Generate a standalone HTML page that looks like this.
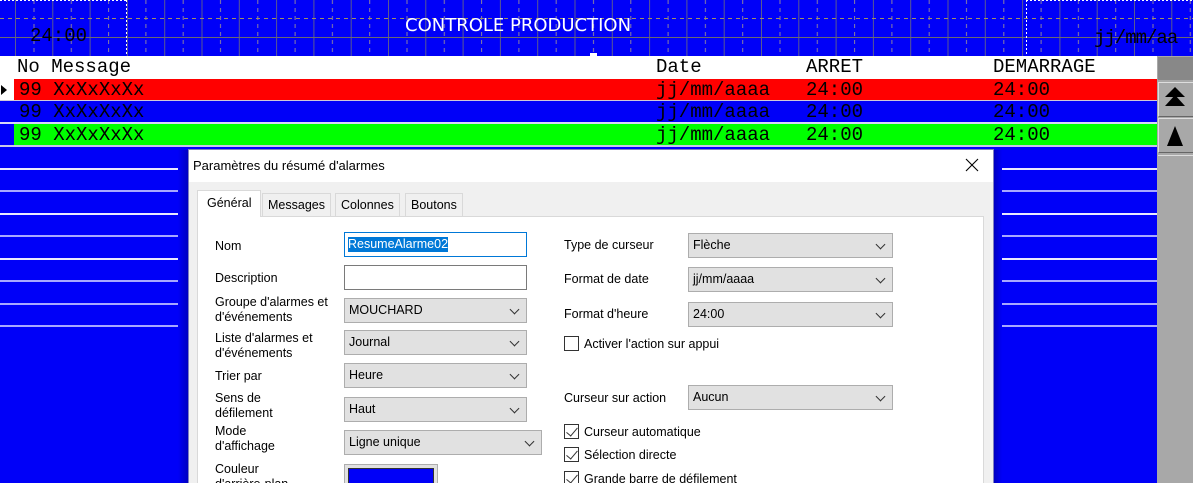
<!DOCTYPE html>
<html style="overflow:hidden"><head><meta charset="utf-8"><style>
*{margin:0;padding:0;box-sizing:border-box}
html,body{width:1193px;height:483px;overflow:hidden}
body{background:#0000f8;position:relative;font-family:"Liberation Sans",sans-serif}
.abs{position:absolute}
.mono{font-family:"Liberation Mono",monospace;font-size:19px;line-height:22px;color:#000}
.hl{position:absolute;left:0;width:1157px;height:2px;background:#a8a8ff}
.lbl{position:absolute;font-size:12.5px;color:#000;line-height:15px}
.cb{position:absolute;height:25px;background:#e1e1e1;border:1px solid #adadad;font-size:12.5px;line-height:23px;padding-left:4px;color:#000}
.cb:after{content:"";position:absolute;right:8px;top:7px;width:6px;height:6px;border-right:1px solid #333;border-bottom:1px solid #333;transform:rotate(45deg)}
.chk{position:absolute;width:15px;height:15px;border:1px solid #333;background:#fff}
.chk.on:after{content:"";position:absolute;left:4px;top:0px;width:5px;height:10px;border-right:1.5px solid #333;border-bottom:1.5px solid #333;transform:rotate(40deg)}
.tab{position:absolute;top:193px;height:23px;font-size:12.5px;line-height:22px;background:#f0f0f0;border:1px solid #d9d9d9;border-bottom:none;padding:0 5px;color:#000}
</style></head><body>
<svg class="abs" style="left:0;top:0" width="1193" height="56">
<defs>
<pattern id="p" patternUnits="userSpaceOnUse" x="15" y="0" width="37.3" height="56">
<line x1="0.5" y1="0" x2="0.5" y2="56" stroke="#5a5a90"/>
<line x1="19" y1="0" x2="19" y2="56" stroke="#8a80a0" stroke-dasharray="4,4"/>
</pattern>
</defs>
<rect width="1193" height="56" fill="#0000f8"/>
<rect width="1193" height="56" fill="url(#p)"/>
<line x1="0" y1="37.5" x2="1193" y2="37.5" stroke="#6a6a70"/>
<line x1="0" y1="18.5" x2="1193" y2="18.5" stroke="#a09060" stroke-dasharray="4,4"/>
<g stroke="#fff" stroke-dasharray="2,2" fill="none">
<line x1="126.5" y1="0" x2="126.5" y2="55"/>
<line x1="0" y1="0.5" x2="126" y2="0.5"/>
<line x1="1026.5" y1="0" x2="1026.5" y2="55"/>
<line x1="1026" y1="0.5" x2="1193" y2="0.5"/>
</g>
<rect x="590" y="53" width="7" height="3" fill="#fff"/>
</svg>
<div class="abs mono" style="left:30px;top:25px">24:00</div>
<div class="abs" style="left:405px;top:15px;color:#fff;font-size:18px;font-family:'DejaVu Sans',sans-serif">CONTROLE PRODUCTION</div>
<div class="abs mono" style="left:1094px;top:27px;letter-spacing:-1px">jj/mm/aa</div>
<div class="abs" style="left:0;top:56px;width:1157px;height:23px;background:#fff"></div>
<div class="abs mono" style="left:17px;top:56px">No Message</div>
<div class="abs mono" style="left:656px;top:56px">Date</div>
<div class="abs mono" style="left:806px;top:56px">ARRET</div>
<div class="abs mono" style="left:993px;top:56px">DEMARRAGE</div>
<div class="abs" style="left:0;top:79px;width:14px;height:22px;background:#fff"></div>
<div class="abs" style="left:1px;top:85px;width:0;height:0;border-left:6px solid #000;border-top:5px solid transparent;border-bottom:5px solid transparent"></div>
<div class="abs" style="left:14px;top:79px;width:1143px;height:21px;background:#ff0000"></div>
<div class="hl" style="top:100px;background:#d0c8d8"></div>
<div class="abs" style="left:0;top:101px;width:1157px;height:21px;background:#0000f8"></div>
<div class="hl" style="top:122px;background:#d8d8f8"></div>
<div class="abs" style="left:14px;top:124px;width:1143px;height:21px;background:#00ff00"></div>
<div class="hl" style="top:145px;background:#c8c8e8"></div>
<div class="abs mono" style="left:19px;top:79px">99 XxXxXxXx</div>
<div class="abs mono" style="left:19px;top:101px">99 XxXxXxXx</div>
<div class="abs mono" style="left:19px;top:124px">99 XxXxXxXx</div>
<div class="abs mono" style="left:656px;top:79px">jj/mm/aaaa</div>
<div class="abs mono" style="left:656px;top:101px">jj/mm/aaaa</div>
<div class="abs mono" style="left:656px;top:124px">jj/mm/aaaa</div>
<div class="abs mono" style="left:806px;top:79px">24:00</div>
<div class="abs mono" style="left:806px;top:101px">24:00</div>
<div class="abs mono" style="left:806px;top:124px">24:00</div>
<div class="abs mono" style="left:993px;top:79px">24:00</div>
<div class="abs mono" style="left:993px;top:101px">24:00</div>
<div class="abs mono" style="left:993px;top:124px">24:00</div>
<div class="hl" style="top:168px;background:#e8e8ff"></div>
<div class="hl" style="top:190px"></div>
<div class="hl" style="top:213px;background:#e8e8ff"></div>
<div class="hl" style="top:235px"></div>
<div class="hl" style="top:258px;background:#e8e8ff"></div>
<div class="hl" style="top:280px"></div>
<div class="hl" style="top:303px"></div>
<div class="hl" style="top:325px"></div>
<div class="abs" style="left:1157px;top:56px;width:36px;height:427px;background:#a8a8a8"></div>
<div class="abs" style="left:1158px;top:57px;width:35px;height:23px;background:#888"></div>
<div class="abs" style="left:1158px;top:82px;width:35px;height:35px;background:#a8a8a8;border-top:1px solid #ddd;border-left:1px solid #ddd;border-bottom:1px solid #666"></div>
<div class="abs" style="left:1158px;top:118px;width:35px;height:35px;background:#a8a8a8;border-top:1px solid #ddd;border-left:1px solid #ddd;border-bottom:1px solid #666"></div>
<div class="abs" style="left:1158px;top:155px;width:35px;height:1px;background:#ddd"></div>
<svg class="abs" style="left:1158px;top:82px" width="35" height="72">
<polygon points="17,5 7,15 27,15" fill="#000"/><polygon points="17,13 7,24 27,24" fill="#000"/>
<polygon points="17,44 9,64 25,64" fill="#000"/>
</svg>
<div class="abs" style="left:178px;top:150px;width:10px;height:333px;background:linear-gradient(to right,#0000f8,#0000c0)"></div>
<div class="abs" style="left:994px;top:150px;width:8px;height:333px;background:linear-gradient(to right,#0000c0,#0000f8)"></div>
<div class="abs" style="left:188px;top:149px;width:806px;height:334px;background:#f0f0f0;border:1px solid #8080c0;border-bottom:none"></div>
<div class="abs" style="left:189px;top:150px;width:804px;height:32px;background:#fff"></div>
<div class="lbl" style="left:193px;top:158px;font-size:13px">Paramètres du résumé d'alarmes</div>
<svg class="abs" style="left:965px;top:158px" width="14" height="14"><path d="M1,1L13,13M13,1L1,13" stroke="#000" stroke-width="1.1"/></svg>
<div class="abs" style="left:197px;top:216px;width:787px;height:267px;background:#fff;border:1px solid #d9d9d9;border-bottom:none"></div>
<div class="tab" style="left:197px;top:190px;height:27px;background:#fff;line-height:24px;padding:0 9px">Général</div>
<div class="tab" style="left:262px">Messages</div>
<div class="tab" style="left:335px">Colonnes</div>
<div class="tab" style="left:405px">Boutons</div>
<div class="lbl" style="left:215px;top:239px">Nom</div>
<div class="lbl" style="left:215px;top:271px">Description</div>
<div class="lbl" style="left:215px;top:295px">Groupe d'alarmes et<br>d'événements</div>
<div class="lbl" style="left:215px;top:331px">Liste d'alarmes et<br>d'événements</div>
<div class="lbl" style="left:215px;top:369px">Trier par</div>
<div class="lbl" style="left:215px;top:391px">Sens de<br>défilement</div>
<div class="lbl" style="left:215px;top:424px">Mode<br>d'affichage</div>
<div class="lbl" style="left:215px;top:462px">Couleur<br>d'arrière-plan</div>
<div class="abs" style="left:344px;top:232px;width:183px;height:25px;border:1px solid #0078d7;background:#fff"><span style="position:absolute;left:3px;top:4px;font-size:12.5px;line-height:15px;background:#0078d7;color:#fff">ResumeAlarme02</span></div>
<div class="abs" style="left:344px;top:265px;width:183px;height:25px;border:1px solid #7a7a7a;background:#fff"></div>
<div class="cb" style="left:344px;top:298px;width:183px">MOUCHARD</div>
<div class="cb" style="left:344px;top:330px;width:183px">Journal</div>
<div class="cb" style="left:344px;top:363px;width:183px">Heure</div>
<div class="cb" style="left:344px;top:397px;width:183px">Haut</div>
<div class="cb" style="left:344px;top:430px;width:198px">Ligne unique</div>
<div class="abs" style="left:344px;top:464px;width:94px;height:25px;border:1px solid #adadad;background:#e1e1e1;padding:3px"><div style="width:100%;height:100%;background:#0000f8;border:1px solid #333"></div></div>
<div class="lbl" style="left:564px;top:238px">Type de curseur</div>
<div class="lbl" style="left:564px;top:272px">Format de date</div>
<div class="lbl" style="left:564px;top:307px">Format d'heure</div>
<div class="lbl" style="left:564px;top:391px">Curseur sur action</div>
<div class="cb" style="left:688px;top:233px;width:205px">Flèche</div>
<div class="cb" style="left:688px;top:267px;width:205px">jj/mm/aaaa</div>
<div class="cb" style="left:688px;top:302px;width:205px">24:00</div>
<div class="cb" style="left:688px;top:385px;width:205px">Aucun</div>
<div class="chk" style="left:564px;top:336px"></div>
<div class="lbl" style="left:584px;top:337px">Activer l'action sur appui</div>
<div class="chk on" style="left:564px;top:424px"></div>
<div class="lbl" style="left:584px;top:425px">Curseur automatique</div>
<div class="chk on" style="left:564px;top:447px"></div>
<div class="lbl" style="left:584px;top:448px">Sélection directe</div>
<div class="chk on" style="left:564px;top:471px"></div>
<div class="lbl" style="left:584px;top:472px">Grande barre de défilement</div>
</body></html>
